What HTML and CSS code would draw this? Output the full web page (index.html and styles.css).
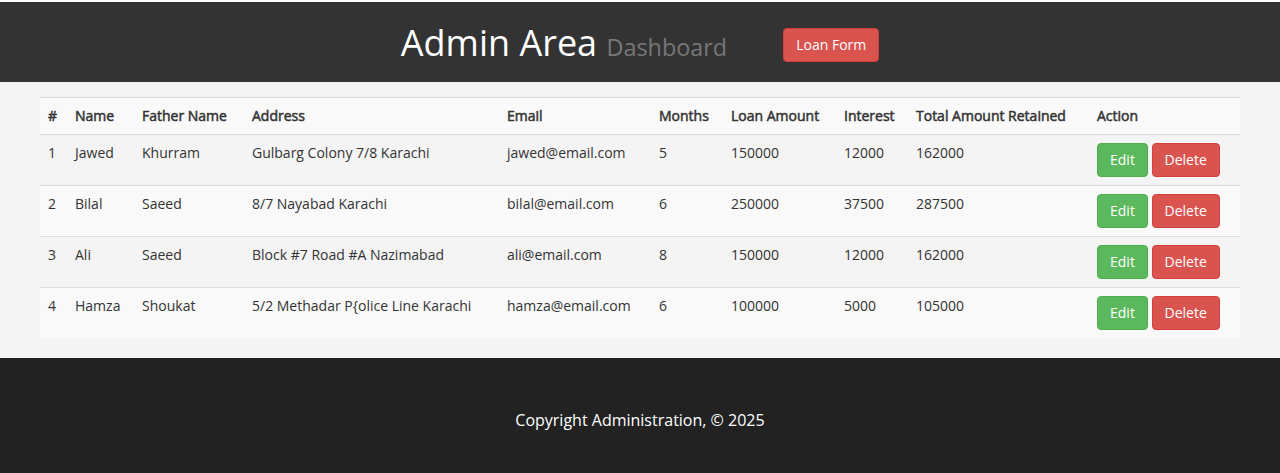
FILE: index.html
```html
<!DOCTYPE html>
<html lang="en">
<head>
<meta charset="utf-8">
<title>Admin Area</title>
<link rel="stylesheet" href="styles.css">
</head>
<body>
<header class="topbar">
  <div class="topbar-inner">
    <h1 class="title">Admin Area <small class="subtitle">Dashboard</small></h1>
    <a class="btn btn-danger" href="#">Loan Form</a>
  </div>
</header>
<main class="main">
  <table class="table">
    <thead>
      <tr>
        <th class="c-num">#</th>
        <th class="c-name">Name</th>
        <th class="c-father">Father Name</th>
        <th class="c-addr">Address</th>
        <th class="c-email">Email</th>
        <th class="c-months">Months</th>
        <th class="c-loan">Loan Amount</th>
        <th class="c-int">Interest</th>
        <th class="c-total">Total Amount Retained</th>
        <th class="c-action">Action</th>
      </tr>
    </thead>
    <tbody>
      <tr>
        <td>1</td><td>Jawed</td><td>Khurram</td><td>Gulbarg Colony 7/8 Karachi</td><td>jawed@email.com</td><td>5</td><td>150000</td><td>12000</td><td>162000</td>
        <td><a class="btn btn-success" href="#">Edit</a> <a class="btn btn-danger" href="#">Delete</a></td>
      </tr>
      <tr>
        <td>2</td><td>Bilal</td><td>Saeed</td><td>8/7 Nayabad Karachi</td><td>bilal@email.com</td><td>6</td><td>250000</td><td>37500</td><td>287500</td>
        <td><a class="btn btn-success" href="#">Edit</a> <a class="btn btn-danger" href="#">Delete</a></td>
      </tr>
      <tr>
        <td>3</td><td>Ali</td><td>Saeed</td><td>Block #7 Road #A Nazimabad</td><td>ali@email.com</td><td>8</td><td>150000</td><td>12000</td><td>162000</td>
        <td><a class="btn btn-success" href="#">Edit</a> <a class="btn btn-danger" href="#">Delete</a></td>
      </tr>
      <tr>
        <td>4</td><td>Hamza</td><td>Shoukat</td><td>5/2 Methadar P{olice Line Karachi</td><td>hamza@email.com</td><td>6</td><td>100000</td><td>5000</td><td>105000</td>
        <td><a class="btn btn-success" href="#">Edit</a> <a class="btn btn-danger" href="#">Delete</a></td>
      </tr>
    </tbody>
  </table>
</main>
<footer class="footer">
  <p class="copy">Copyright Administration, &copy; 2025</p>
</footer>
</body>
</html>
```
FILE: styles.css
```css
* { box-sizing: border-box; }
html, body { margin: 0; padding: 0; }
body {
  font-family: "Open Sans", "Liberation Sans", sans-serif;
  font-size: 14px;
  line-height: 20px;
  color: #333;
  background: #fff;
}
.topbar {
  margin-top: 2px;
  background: #333;
  height: 80px;
}
.topbar-inner {
  height: 80px;
  padding-top: 6px;
  display: flex;
  align-items: center;
  justify-content: center;
  gap: 56px;
}
.title {
  margin: 0;
  font-size: 36px;
  font-weight: 400;
  line-height: 40px;
  color: #fff;
}
.subtitle {
  font-size: 65%;
  color: #777;
  font-weight: 400;
}
.btn {
  display: inline-block;
  padding: 6px 12px;
  font-size: 14px;
  line-height: 20px;
  border: 1px solid transparent;
  border-radius: 4px;
  color: #fff;
  text-decoration: none;
  white-space: nowrap;
  vertical-align: middle;
}
.btn-danger { background: #d9534f; border-color: #d43f3a; }
.btn-success { background: #5cb85c; border-color: #4cae4c; }
.main {
  background: #f4f4f4;
  padding: 15px 40px 20px;
}
.table {
  width: 100%;
  border-collapse: collapse;
  table-layout: fixed;
  background: #f9f9f9;
}
.table th, .table td {
  padding: 8px;
  text-align: left;
  vertical-align: top;
  border-top: 1px solid #ddd;
}
.table th {
  font-weight: 400;
  -webkit-text-stroke: 0.5px #333;
  vertical-align: bottom;
  border-bottom: 1px solid #ddd;
}
.table tbody tr:first-child td { border-top: 0; }
.table tbody tr:nth-child(odd) { background: #f4f4f4; }
.c-num { width: 27px; }
.c-name { width: 67px; }
.c-father { width: 110px; }
.c-addr { width: 255px; }
.c-email { width: 152px; }
.c-months { width: 72px; }
.c-loan { width: 113px; }
.c-int { width: 72px; }
.c-total { width: 181px; }
.c-action { width: 151px; }
.footer {
  background: #222;
  padding: 50px 0;
  min-height: 115px;
}
.copy {
  margin: 0;
  text-align: center;
  color: #fff;
  font-size: 16px;
  line-height: 24px;
}
```
